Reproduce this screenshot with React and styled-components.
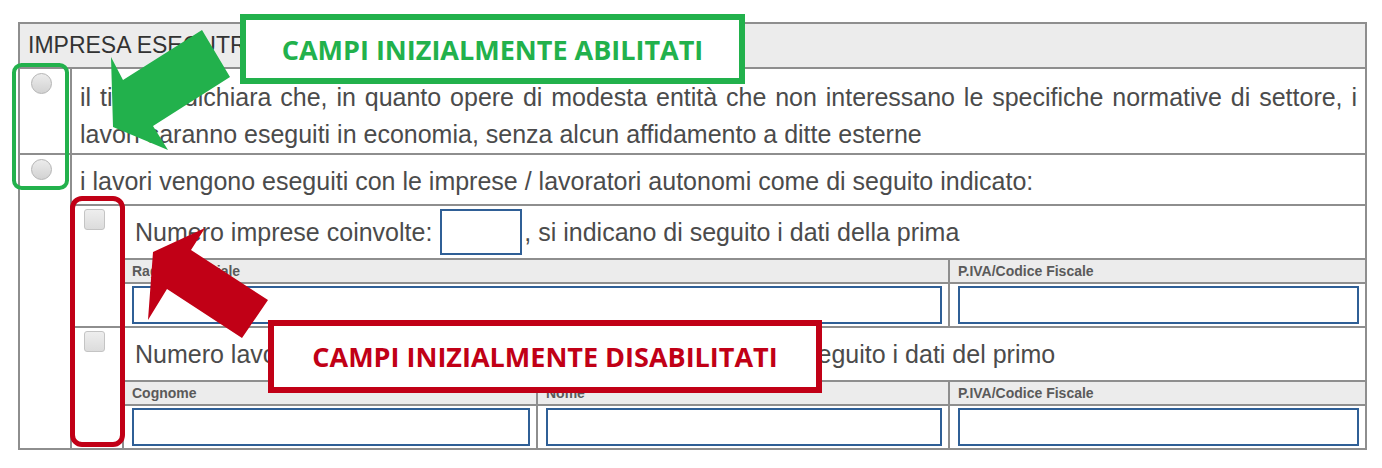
import React from "react";
import styled, { createGlobalStyle } from "styled-components";

const LINE = "#8e8e8e";
const FIELD = "#2f5f96";
const GREEN = "#22b14c";
const RED = "#c10016";

const GlobalStyle = createGlobalStyle`
  * {
    box-sizing: border-box;
  }

  body {
    margin: 0;
    background: #fff;
    font-family: "Liberation Sans", Arial, sans-serif;
  }
`;

const Page = styled.div`
  position: relative;
  width: 1382px;
  height: 468px;
  padding: 22px 0 0 18px;
  overflow: hidden;
`;

const Section = styled.div`
  width: 1349px;
  border: 2px solid ${LINE};
`;

const SectionTitle = styled.div`
  height: 45px;
  padding: 0 8px;
  display: flex;
  align-items: center;
  background: #ececec;
  border-bottom: 2px solid ${LINE};
  font-size: 23px;
  color: #333;
  text-transform: uppercase;
`;

const OptionRow = styled.div`
  display: grid;
  grid-template-columns: 52px 1fr;
  border-bottom: ${(props) => (props.$last ? "none" : `2px solid ${LINE}`)};
  border-top: ${(props) => (props.$nested ? `2px solid ${LINE}` : "none")};
`;

const MarkCell = styled.div`
  border-right: 2px solid ${LINE};
  padding: ${(props) => (props.$nested ? "3px 0 0 12px" : "4px 0 0 11px")};
`;

const Radio = styled.span`
  display: block;
  width: 21px;
  height: 21px;
  border-radius: 50%;
  border: 1px solid #b4b4b4;
  background: linear-gradient(#ececec, #d2d2d2);
`;

const Checkbox = styled.span`
  display: block;
  width: 21px;
  height: 21px;
  border-radius: 3px;
  border: 1px solid #c4c4c4;
  background: linear-gradient(#eeeeee, #dcdcdc);
`;

const Paragraph = styled.p`
  margin: 0;
  padding: ${(props) => (props.$lead ? "8px 8px 4px" : "10px 8px 0")};
  font-size: 25px;
  line-height: 37px;
  color: #4b4b4b;
  text-align: justify;
`;

const Body = styled.div`
  display: flex;
  flex-direction: column;
`;

const Prompt = styled.div`
  height: 52px;
  padding-left: 11px;
  display: flex;
  align-items: center;
  font-size: 25px;
  color: #4b4b4b;
  white-space: nowrap;
`;

const CountField = styled.span`
  display: inline-block;
  width: 82px;
  height: 46px;
  margin: 0 2px 0 8px;
  border: 2px solid ${FIELD};
  background: #fff;
`;

const SubTable = styled.div`
  display: grid;
  grid-template-columns: ${(props) => props.$cols};
`;

const HeadCell = styled.div`
  height: 24px;
  padding-left: 8px;
  background: #ececec;
  border-top: 2px solid ${LINE};
  border-right: ${(props) => (props.$end ? "none" : `2px solid ${LINE}`)};
  font-size: 14px;
  font-weight: 700;
  line-height: 22px;
  color: #5a5a5a;
`;

const InputCell = styled.div`
  height: 44px;
  padding: 2px 6px 2px 8px;
  border-top: 2px solid ${LINE};
  border-right: ${(props) => (props.$end ? "none" : `2px solid ${LINE}`)};
`;

const Field = styled.div`
  height: 100%;
  border: 2px solid ${FIELD};
  background: #fff;
`;

const Arrows = styled.svg`
  position: absolute;
  left: 0;
  top: 0;
  pointer-events: none;
`;

const Bracket = styled.div`
  position: absolute;
  left: ${(props) => props.$x}px;
  top: ${(props) => props.$y}px;
  width: ${(props) => props.$w}px;
  height: ${(props) => props.$h}px;
  border: ${(props) => props.$stroke}px solid ${(props) => props.$color};
  border-radius: ${(props) => props.$stroke * 2.4}px;
`;

const Callout = styled.div`
  position: absolute;
  left: ${(props) => props.$x}px;
  top: ${(props) => props.$y}px;
  width: ${(props) => props.$w}px;
  height: ${(props) => props.$h}px;
  border: 6px solid ${(props) => props.$color};
  background: #fff;
  display: flex;
  align-items: center;
  justify-content: center;
  font-family: "Open Sans", "Liberation Sans", sans-serif;
  font-weight: 700;
  font-size: 27px;
  color: ${(props) => props.$color};
  white-space: nowrap;
`;

const Fields = ({ labels }) => (
  <>
    {labels.map((label, i) => (
      <HeadCell key={"h" + i} $end={i === labels.length - 1}>
        {label}
      </HeadCell>
    ))}
    {labels.map((label, i) => (
      <InputCell key={"i" + i} $end={i === labels.length - 1}>
        <Field />
      </InputCell>
    ))}
  </>
);

export default function App() {
  return (
    <Page>
      <GlobalStyle />
      <Section>
        <SectionTitle>Impresa esecutrice</SectionTitle>

        <OptionRow>
          <MarkCell>
            <Radio />
          </MarkCell>
          <Paragraph>
            il titolare dichiara che, in quanto opere di modesta entità che non
            interessano le specifiche normative di settore, i lavori saranno
            eseguiti in economia, senza alcun affidamento a ditte esterne
          </Paragraph>
        </OptionRow>

        <OptionRow $last>
          <MarkCell>
            <Radio />
          </MarkCell>
          <Body>
            <Paragraph $lead>
              i lavori vengono eseguiti con le imprese / lavoratori autonomi come
              di seguito indicato:
            </Paragraph>

            <OptionRow $nested $last>
              <MarkCell $nested>
                <Checkbox />
              </MarkCell>
              <Body>
                <Prompt>
                  Numero imprese coinvolte:
                  <CountField />, si indicano di seguito i dati della prima
                </Prompt>
                <SubTable $cols="826px 1fr">
                  <Fields labels={["Ragione Sociale", "P.IVA/Codice Fiscale"]} />
                </SubTable>
              </Body>
            </OptionRow>

            <OptionRow $nested $last>
              <MarkCell $nested>
                <Checkbox />
              </MarkCell>
              <Body>
                <Prompt>
                  Numero lavoratori autonomi coinvolti:
                  <CountField />, si indicano di seguito i dati del primo
                </Prompt>
                <SubTable $cols="414px 412px 1fr">
                  <Fields labels={["Cognome", "Nome", "P.IVA/Codice Fiscale"]} />
                </SubTable>
              </Body>
            </OptionRow>
          </Body>
        </OptionRow>
      </Section>

      <Bracket $x={12} $y={63} $w={57} $h={127} $stroke={4} $color={GREEN} />
      <Bracket $x={70} $y={196} $w={55} $h={251} $stroke={5} $color={RED} />

      <Arrows width="1382" height="468" viewBox="0 0 1382 468">
        <polygon
          points="113,127 111,57 123,80 202,30 230,77 153,126 168,150"
          fill={GREEN}
        />
        <polygon
          points="153,252 205,228 191,250 268,300 242,338 167,289 148,320"
          fill={RED}
        />
      </Arrows>

      <Callout $x={240} $y={14} $w={505} $h={70} $color={GREEN}>
        CAMPI INIZIALMENTE ABILITATI
      </Callout>
      <Callout $x={268} $y={320} $w={554} $h={73} $color={RED}>
        CAMPI INIZIALMENTE DISABILITATI
      </Callout>
    </Page>
  );
}
